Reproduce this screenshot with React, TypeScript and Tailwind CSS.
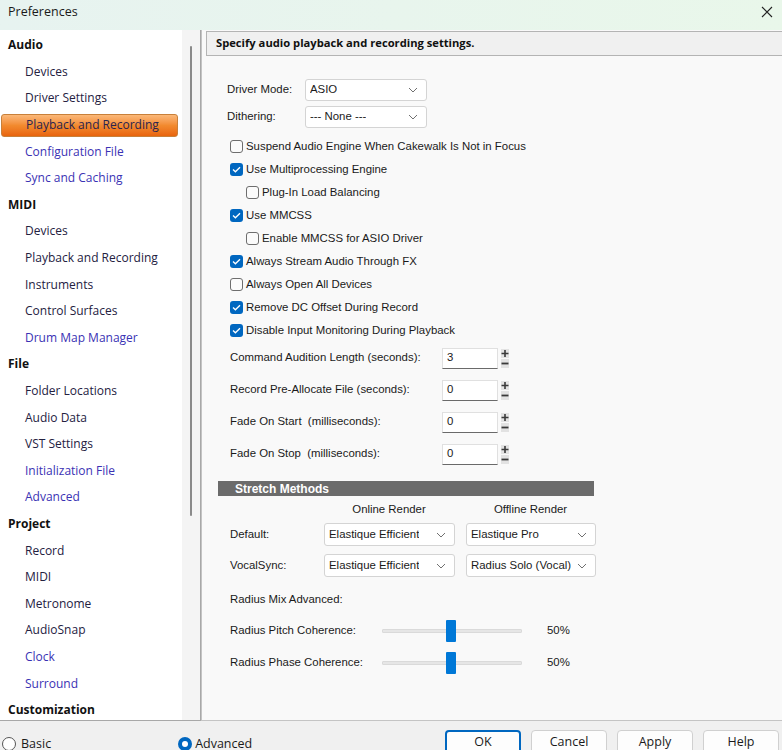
import React from 'react';

type NavItem = { t: string; h?: boolean; sel?: boolean; link?: boolean };

const nav: NavItem[] = [
  { t: 'Audio', h: true },
  { t: 'Devices' },
  { t: 'Driver Settings' },
  { t: 'Playback and Recording', sel: true },
  { t: 'Configuration File', link: true },
  { t: 'Sync and Caching', link: true },
  { t: 'MIDI', h: true },
  { t: 'Devices' },
  { t: 'Playback and Recording' },
  { t: 'Instruments' },
  { t: 'Control Surfaces' },
  { t: 'Drum Map Manager', link: true },
  { t: 'File', h: true },
  { t: 'Folder Locations' },
  { t: 'Audio Data' },
  { t: 'VST Settings' },
  { t: 'Initialization File', link: true },
  { t: 'Advanced', link: true },
  { t: 'Project', h: true },
  { t: 'Record' },
  { t: 'MIDI' },
  { t: 'Metronome' },
  { t: 'AudioSnap' },
  { t: 'Clock', link: true },
  { t: 'Surround', link: true },
  { t: 'Customization', h: true },
];

const checks = [
  { t: 'Suspend Audio Engine When Cakewalk Is Not in Focus', on: false, indent: false },
  { t: 'Use Multiprocessing Engine', on: true, indent: false },
  { t: 'Plug-In Load Balancing', on: false, indent: true },
  { t: 'Use MMCSS', on: true, indent: false },
  { t: 'Enable MMCSS for ASIO Driver', on: false, indent: true },
  { t: 'Always Stream Audio Through FX', on: true, indent: false },
  { t: 'Always Open All Devices', on: false, indent: false },
  { t: 'Remove DC Offset During Record', on: true, indent: false },
  { t: 'Disable Input Monitoring During Playback', on: true, indent: false },
];

const spins = [
  { t: 'Command Audition Length (seconds):', v: '3' },
  { t: 'Record Pre-Allocate File (seconds):', v: '0' },
  { t: 'Fade On Start  (milliseconds):', v: '0' },
  { t: 'Fade On Stop  (milliseconds):', v: '0' },
];

const Chevron = () => (
  <svg width="10" height="6" viewBox="0 0 10 6" className="shrink-0">
    <path d="M1 1 L5 5 L9 1" fill="none" stroke="#707070" strokeWidth="1" />
  </svg>
);

const Select = ({ value, className }: { value: string; className: string }) => (
  <div className={`flex items-center justify-between bg-white border border-[#d4d4d4] rounded-[3px] pl-[4px] pr-[8px] ${className}`}>
    <span className="truncate">{value}</span>
    <Chevron />
  </div>
);

const Checkbox = ({ on }: { on: boolean }) =>
  on ? (
    <div className="w-[13px] h-[13px] rounded-[3px] bg-[#0067c0] flex items-center justify-center shrink-0">
      <svg width="9" height="7" viewBox="0 0 9 7">
        <path d="M1 3.5 L3.4 5.8 L8 1.2" fill="none" stroke="white" strokeWidth="1.3" />
      </svg>
    </div>
  ) : (
    <div className="w-[13px] h-[13px] rounded-[3px] border border-[#6e6e6e] bg-[#fbfbfb] shrink-0" />
  );

const Slider = () => (
  <div className="relative w-[140px] h-[22px] flex items-center">
    <div className="w-full h-[4px] bg-[#e6e6e6] border border-[#dadada] rounded-[1px]" />
    <div className="absolute left-[64px] top-0 w-[10px] h-[22px] bg-[#0078d7] rounded-[1px]" />
  </div>
);

export default function App() {
  return (
    <div className="w-[782px] h-[750px] overflow-hidden bg-[#f0f0f0] flex flex-col text-[#1a1a1a]" style={{ fontFamily: '"Liberation Sans", Arial, sans-serif' }}>
      {/* title bar */}
      <div className="h-[30px] shrink-0 flex items-center justify-between pl-[8px] pr-[8px] bg-gradient-to-r from-[#e7f3f0] to-[#e9f7ea]">
        <span className="text-[12.5px] text-[#1a1a1a] -mt-[6px]" style={{ fontFamily: '"Open Sans", sans-serif' }}>Preferences</span>
        <svg width="12" height="12" viewBox="0 0 12 12" className="-mt-[6px] mr-[1px]">
          <path d="M1 1 L11 11 M11 1 L1 11" stroke="#222" strokeWidth="1.1" />
        </svg>
      </div>

      <div className="flex h-[691px] shrink-0">
        {/* sidebar */}
        <div className="w-[201px] shrink-0 flex bg-white border-r border-[#a8a8a8] border-b" style={{ fontFamily: '"Open Sans", sans-serif' }}>
          <div className="w-[182px] pt-[2px] flex flex-col">
            {nav.map((n, i) => (
              <div key={i} className="h-[26.6px] flex items-center shrink-0">
                {n.h ? (
                  <span className="pl-[8px] text-[12px] font-bold text-[#111]">{n.t}</span>
                ) : n.sel ? (
                  <div className="ml-[1px] w-[177px] h-[23px] flex items-center rounded-[3px] border border-[#c8803a] bg-gradient-to-b from-[#fbb878] via-[#f28a2e] to-[#e8640c] pl-[24px] text-[12px] text-[#2a2450]">
                    {n.t}
                  </div>
                ) : (
                  <span className={`pl-[25px] text-[12px] ${n.link ? 'text-[#3a32b4]' : 'text-[#24213f]'}`}>{n.t}</span>
                )}
              </div>
            ))}
          </div>
          <div className="flex-1 bg-[#f4f4f4] flex justify-center pt-[16px]">
            <div className="w-[2px] h-[470px] bg-[#8a8a8a] rounded-full" />
          </div>
        </div>

        {/* main */}
        <div className="flex-1 flex flex-col bg-[#f9f9f9] border-l border-[#c4c4c4] border-b overflow-hidden">
          <div className="mt-[1px] ml-[4px] h-[25px] w-[590px] shrink-0 bg-[#f0f0f0] border border-[#b4b4b4] flex items-center pl-[9px] text-[11.2px] font-bold text-[#111]" style={{ fontFamily: '"Open Sans", sans-serif' }}>
            Specify audio playback and recording settings.
          </div>

          <div className="pl-[24px] text-[11.4px] flex flex-col">
            {/* driver mode / dithering */}
            <div className="mt-[23px] flex items-center h-[22px]">
              <span className="w-[79px] pl-[1px]">Driver Mode:</span>
              <Select value="ASIO" className="w-[122px] h-[22px]" />
            </div>
            <div className="mt-[5px] flex items-center h-[22px]">
              <span className="w-[79px] pl-[1px]">Dithering:</span>
              <Select value="--- None ---" className="w-[122px] h-[22px]" />
            </div>

            {/* checkboxes */}
            <div className="mt-[7px] flex flex-col pl-[4px]">
              {checks.map((c, i) => (
                <div key={i} className={`h-[23px] flex items-center gap-[3px] ${c.indent ? 'pl-[16px]' : ''}`}>
                  <Checkbox on={c.on} />
                  <span>{c.t}</span>
                </div>
              ))}
            </div>

            {/* spin rows */}
            <div className="flex flex-col pl-[4px]">
              {spins.map((s, i) => (
                <div key={i} className="h-[32px] flex items-center">
                  <span className="w-[212px] whitespace-pre">{s.t}</span>
                  <div className="w-[56px] h-[21px] bg-white border border-[#e0e0e0] border-b-[#6a6a6a] flex items-center pl-[4px]">{s.v}</div>
                  <div className="ml-[3px] w-[8px] h-[21px] flex flex-col items-center justify-between py-[1px]">
                    <svg width="8" height="9" viewBox="0 0 8 9">
                      <rect x="0" y="0" width="8" height="9" fill="#e2e2e2" />
                      <path d="M4 1 V8 M0.5 4.5 H7.5" stroke="#3a3a3a" strokeWidth="1.6" />
                    </svg>
                    <svg width="8" height="9" viewBox="0 0 8 9">
                      <rect x="0" y="0" width="8" height="9" fill="#e2e2e2" />
                      <path d="M0.5 4.5 H7.5" stroke="#3a3a3a" strokeWidth="1.8" />
                    </svg>
                  </div>
                </div>
              ))}
            </div>

            {/* stretch methods */}
            <div className="-ml-[8px] mt-[11px] w-[376px] h-[15px] bg-[#6b6b6b] text-white font-bold text-[12px] flex items-center pl-[17px]">
              Stretch Methods
            </div>
            <div className="flex h-[27px] items-center pl-[4px]">
              <span className="w-[94px]" />
              <span className="w-[130px] text-center">Online Render</span>
              <span className="w-[12px]" />
              <span className="w-[129px] text-center">Offline Render</span>
            </div>
            <div className="flex items-center h-[23px] pl-[4px]">
              <span className="w-[94px]">Default:</span>
              <Select value="Elastique Efficient" className="w-[131px] h-[23px]" />
              <span className="w-[11px]" />
              <Select value="Elastique Pro" className="w-[130px] h-[23px]" />
            </div>
            <div className="mt-[8px] flex items-center h-[23px] pl-[4px]">
              <span className="w-[94px]">VocalSync:</span>
              <Select value="Elastique Efficient" className="w-[131px] h-[23px]" />
              <span className="w-[11px]" />
              <Select value="Radius Solo (Vocal)" className="w-[130px] h-[23px]" />
            </div>

            <div className="mt-[12px] h-[22px] flex items-center pl-[4px]">Radius Mix Advanced:</div>
            <div className="mt-[9px] h-[22px] flex items-center pl-[4px]">
              <span className="w-[152px]">Radius Pitch Coherence:</span>
              <Slider />
              <span className="ml-[25px]">50%</span>
            </div>
            <div className="mt-[10px] h-[22px] flex items-center pl-[4px]">
              <span className="w-[152px]">Radius Phase Coherence:</span>
              <Slider />
              <span className="ml-[25px]">50%</span>
            </div>
          </div>
        </div>
      </div>

      {/* bottom bar */}
      <div className="flex-1 flex items-start relative text-[12.5px]" style={{ fontFamily: '"Open Sans", sans-serif' }}>
        <div className="flex items-center gap-[5px] pl-[2px] mt-[14px]">
          <div className="w-[14px] h-[14px] rounded-full border border-[#555] bg-white" />
          <span>Basic</span>
        </div>
        <div className="flex items-center gap-[3px] ml-[127px] mt-[14px]">
          <div className="w-[14px] h-[14px] rounded-full bg-[#0067c0] flex items-center justify-center">
            <div className="w-[6px] h-[6px] rounded-full bg-white" />
          </div>
          <span>Advanced</span>
        </div>
        <div className="ml-auto mr-[3px] mt-[9px] flex gap-[10px]">
          {['OK', 'Cancel', 'Apply', 'Help'].map((b, i) => (
            <div
              key={b}
              className={`w-[76px] h-[24px] rounded-[4px] bg-[#fdfdfd] flex items-center justify-center text-[12.5px] ${i === 0 ? 'border-2 border-[#0067c0]' : 'border border-[#d0d0d0]'}`}
            >
              {b}
            </div>
          ))}
        </div>
      </div>
    </div>
  );
}
